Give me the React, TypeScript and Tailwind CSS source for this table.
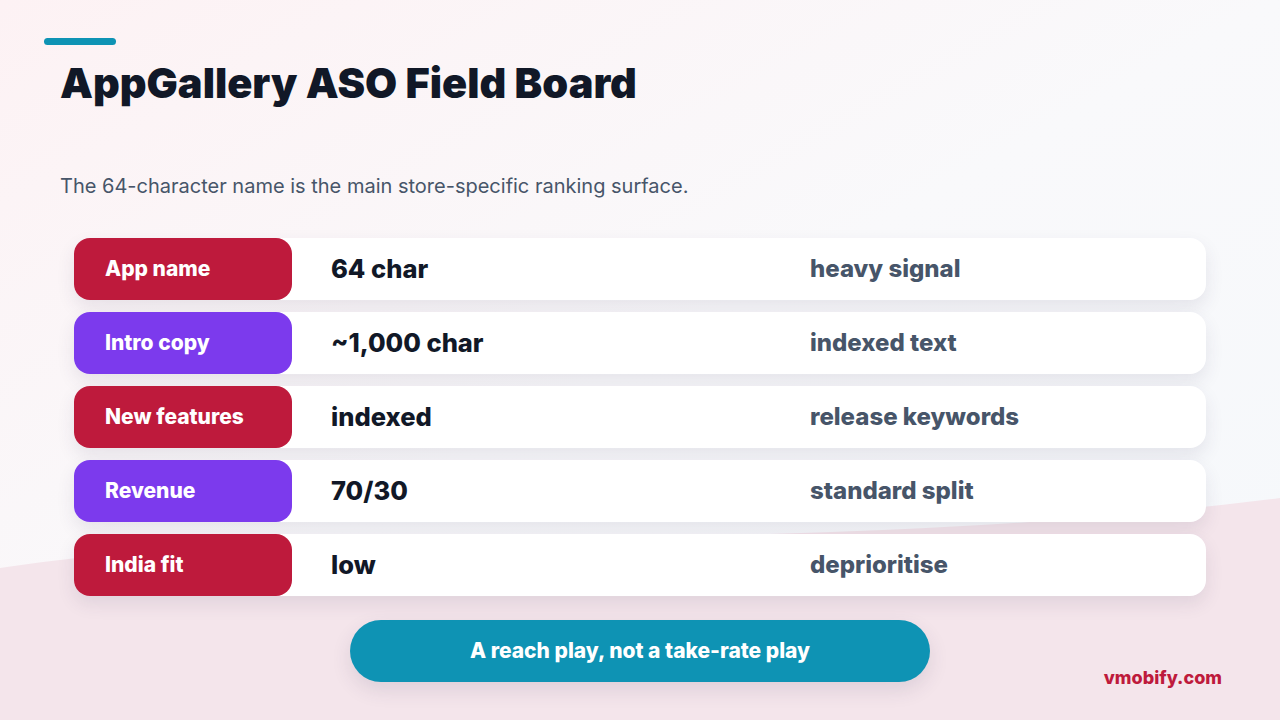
import React from "react";

const rows = [
  { label: "App name", value: "64 char", note: "heavy signal", color: "bg-[#be1a3c]" },
  { label: "Intro copy", value: "~1,000 char", note: "indexed text", color: "bg-[#7c3aed]" },
  { label: "New features", value: "indexed", note: "release keywords", color: "bg-[#be1a3c]" },
  { label: "Revenue", value: "70/30", note: "standard split", color: "bg-[#7c3aed]" },
  { label: "India fit", value: "low", note: "deprioritise", color: "bg-[#be1a3c]" },
];

export default function App() {
  return (
    <div
      className="relative w-[1280px] h-[720px] overflow-hidden bg-gradient-to-br from-[#fdf2f4] via-[#f9f9fb] to-[#f5f8fb]"
      style={{ fontFamily: "Inter, 'Noto Sans', sans-serif" }}
    >
      <svg className="absolute inset-0" width="1280" height="720" viewBox="0 0 1280 720">
        <path d="M0,568 C300,520 800,560 1280,498 L1280,720 L0,720 Z" fill="#f4e5eb" />
      </svg>
      <div className="relative flex flex-col h-full">
        <div className="pl-[44px] pt-[38px]">
          <div className="w-[72px] h-[7px] rounded-full bg-[#0e93b4]" />
        </div>
        <h1 className="pl-[60px] mt-[14px] text-[41.5px] leading-[48px] font-black text-[#111827]">
          AppGallery ASO Field Board
        </h1>
        <p className="pl-[60px] mt-[65px] text-[20px] leading-[28px] text-[#475569]">
          The 64-character name is the main store-specific ranking surface.
        </p>
        <div className="mt-[38px] pl-[74px] w-[1206px] flex flex-col gap-[12px]">
          {rows.map((r) => (
            <div
              key={r.label}
              className="flex items-center h-[62px] rounded-[16px] bg-white shadow-[0_8px_18px_rgba(60,50,90,0.10)]"
            >
              <div
                className={`${r.color} w-[218px] h-full rounded-[16px] flex items-center pl-[31px] text-white text-[21px] font-extrabold`}
              >
                {r.label}
              </div>
              <div className="w-[518px] pl-[39px] text-[25.5px] font-extrabold text-[#111827]">
                {r.value}
              </div>
              <div className="text-[24px] font-extrabold text-[#475569]">{r.note}</div>
            </div>
          ))}
        </div>
        <div className="relative mt-[24px] flex justify-center">
          <div className="w-[580px] h-[62px] rounded-full bg-[#0e93b4] flex items-center justify-center text-white text-[21px] font-extrabold shadow-[0_8px_20px_rgba(60,50,90,0.12)]">
            A reach play, not a take-rate play
          </div>
          <div className="absolute right-[58px] top-[44px] text-[18px] font-extrabold text-[#be1a3c]">
            vmobify.com
          </div>
        </div>
      </div>
    </div>
  );
}
